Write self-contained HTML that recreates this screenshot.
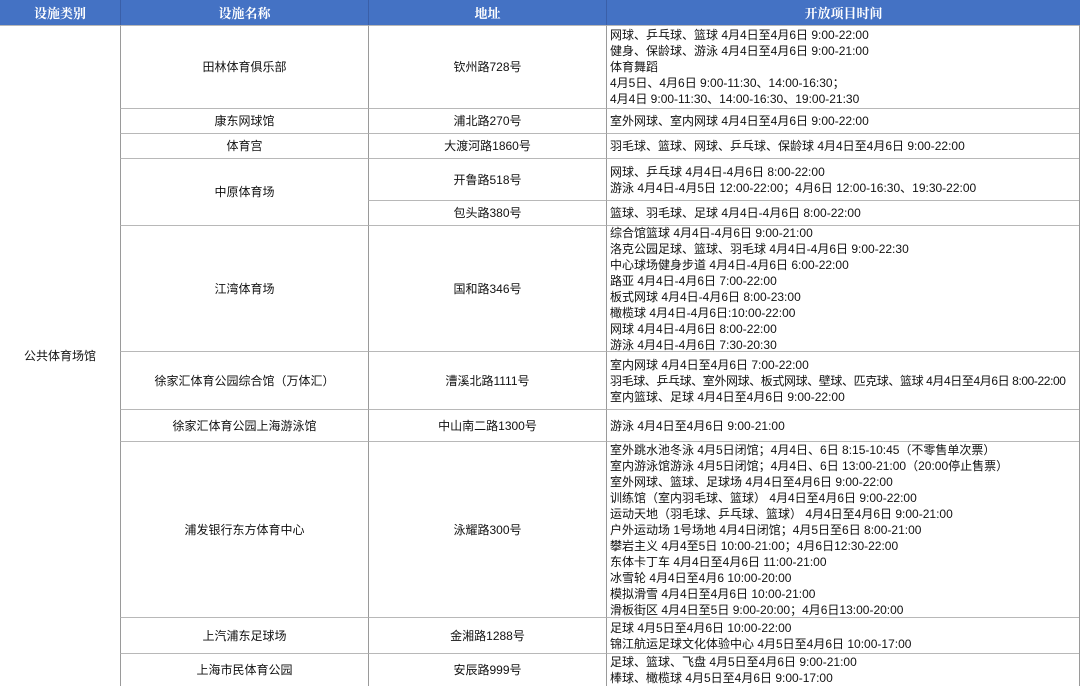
<!DOCTYPE html>
<html><head><meta charset="utf-8"><style>
*{margin:0;padding:0;box-sizing:border-box}
body{width:1080px;height:686px;background:#fff;position:relative;overflow:hidden;font-family:"Liberation Sans","Noto Sans CJK SC",sans-serif;font-size:12px;color:#111}
.c{position:absolute;border-left:1px solid #9a9a9a;border-top:1px solid #b8b8b8;display:flex;align-items:center;justify-content:center;text-align:center;line-height:16px;white-space:nowrap}
.t{justify-content:flex-start;text-align:left;padding-left:3px}
.h{position:absolute;top:0;height:25px;background:#4472c4;color:#fff;font-family:"Liberation Serif","Noto Serif CJK SC",serif;font-weight:bold;font-size:13px;display:flex;align-items:center;justify-content:center;border-left:1px solid #3a5fa8}
</style></head><body>
<div class="h" style="left:0;width:120px;border-left:none">设施类别</div>
<div class="h" style="left:120px;width:248px">设施名称</div>
<div class="h" style="left:368px;width:238px">地址</div>
<div class="h" style="left:606px;width:474px">开放项目时间</div>

<div class="c" style="left:0;top:25px;width:120px;height:661px;border-left:none">公共体育场馆</div>

<div class="c" style="left:120px;top:25px;width:248px;height:83px">田林体育俱乐部</div>
<div class="c" style="left:368px;top:25px;width:238px;height:83px">钦州路728号</div>
<div class="c t" style="left:606px;top:25px;width:474px;height:83px">网球、乒乓球、篮球 4月4日至4月6日 9:00-22:00<br>健身、保龄球、游泳 4月4日至4月6日 9:00-21:00<br>体育舞蹈<br>4月5日、4月6日 9:00-11:30、14:00-16:30；<br>4月4日 9:00-11:30、14:00-16:30、19:00-21:30</div>

<div class="c" style="left:120px;top:108px;width:248px;height:25px">康东网球馆</div>
<div class="c" style="left:368px;top:108px;width:238px;height:25px">浦北路270号</div>
<div class="c t" style="left:606px;top:108px;width:474px;height:25px">室外网球、室内网球 4月4日至4月6日 9:00-22:00</div>

<div class="c" style="left:120px;top:133px;width:248px;height:25px">体育宫</div>
<div class="c" style="left:368px;top:133px;width:238px;height:25px">大渡河路1860号</div>
<div class="c t" style="left:606px;top:133px;width:474px;height:25px">羽毛球、篮球、网球、乒乓球、保龄球 4月4日至4月6日 9:00-22:00</div>

<div class="c" style="left:120px;top:158px;width:248px;height:67px">中原体育场</div>
<div class="c" style="left:368px;top:158px;width:238px;height:42px">开鲁路518号</div>
<div class="c t" style="left:606px;top:158px;width:474px;height:42px">网球、乒乓球 4月4日-4月6日 8:00-22:00<br>游泳 4月4日-4月5日 12:00-22:00；4月6日 12:00-16:30、19:30-22:00</div>
<div class="c" style="left:368px;top:200px;width:238px;height:25px">包头路380号</div>
<div class="c t" style="left:606px;top:200px;width:474px;height:25px">篮球、羽毛球、足球 4月4日-4月6日 8:00-22:00</div>

<div class="c" style="left:120px;top:225px;width:248px;height:126px">江湾体育场</div>
<div class="c" style="left:368px;top:225px;width:238px;height:126px">国和路346号</div>
<div class="c t" style="left:606px;top:225px;width:474px;height:126px">综合馆篮球 4月4日-4月6日 9:00-21:00<br>洛克公园足球、篮球、羽毛球 4月4日-4月6日 9:00-22:30<br>中心球场健身步道 4月4日-4月6日 6:00-22:00<br>路亚 4月4日-4月6日 7:00-22:00<br>板式网球 4月4日-4月6日 8:00-23:00<br>橄榄球 4月4日-4月6日:10:00-22:00<br>网球 4月4日-4月6日 8:00-22:00<br>游泳 4月4日-4月6日 7:30-20:30</div>

<div class="c" style="left:120px;top:351px;width:248px;height:58px">徐家汇体育公园综合馆（万体汇）</div>
<div class="c" style="left:368px;top:351px;width:238px;height:58px">漕溪北路1111号</div>
<div class="c t" style="left:606px;top:351px;width:474px;height:58px"><div>室内网球 4月4日至4月6日 7:00-22:00<br><span style="letter-spacing:-0.4px">羽毛球、乒乓球、室外网球、板式网球、壁球、匹克球、篮球 4月4日至4月6日 8:00-22:00</span><br>室内篮球、足球 4月4日至4月6日 9:00-22:00</div></div>

<div class="c" style="left:120px;top:409px;width:248px;height:32px">徐家汇体育公园上海游泳馆</div>
<div class="c" style="left:368px;top:409px;width:238px;height:32px">中山南二路1300号</div>
<div class="c t" style="left:606px;top:409px;width:474px;height:32px">游泳 4月4日至4月6日 9:00-21:00</div>

<div class="c" style="left:120px;top:441px;width:248px;height:176px">浦发银行东方体育中心</div>
<div class="c" style="left:368px;top:441px;width:238px;height:176px">泳耀路300号</div>
<div class="c t" style="left:606px;top:441px;width:474px;height:176px">室外跳水池冬泳 4月5日闭馆；4月4日、6日 8:15-10:45（不零售单次票）<br>室内游泳馆游泳 4月5日闭馆；4月4日、6日 13:00-21:00（20:00停止售票）<br>室外网球、篮球、足球场 4月4日至4月6日 9:00-22:00<br>训练馆（室内羽毛球、篮球） 4月4日至4月6日 9:00-22:00<br>运动天地（羽毛球、乒乓球、篮球） 4月4日至4月6日 9:00-21:00<br>户外运动场 1号场地 4月4日闭馆；4月5日至6日 8:00-21:00<br>攀岩主义 4月4至5日 10:00-21:00；4月6日12:30-22:00<br>东体卡丁车 4月4日至4月6日 11:00-21:00<br>冰雪轮 4月4日至4月6 10:00-20:00<br>模拟滑雪 4月4日至4月6日 10:00-21:00<br>滑板街区 4月4日至5日 9:00-20:00；4月6日13:00-20:00</div>

<div class="c" style="left:120px;top:617px;width:248px;height:36px">上汽浦东足球场</div>
<div class="c" style="left:368px;top:617px;width:238px;height:36px">金湘路1288号</div>
<div class="c t" style="left:606px;top:617px;width:474px;height:36px">足球 4月5日至4月6日 10:00-22:00<br>锦江航运足球文化体验中心 4月5日至4月6日 10:00-17:00</div>

<div class="c" style="left:120px;top:653px;width:248px;height:33px">上海市民体育公园</div>
<div class="c" style="left:368px;top:653px;width:238px;height:33px">安辰路999号</div>
<div class="c t" style="left:606px;top:653px;width:474px;height:33px">足球、篮球、飞盘 4月5日至4月6日 9:00-21:00<br>棒球、橄榄球 4月5日至4月6日 9:00-17:00</div>
<div style="position:absolute;right:0;top:25px;width:1px;height:661px;background:#9a9a9a"></div>
</body></html>
